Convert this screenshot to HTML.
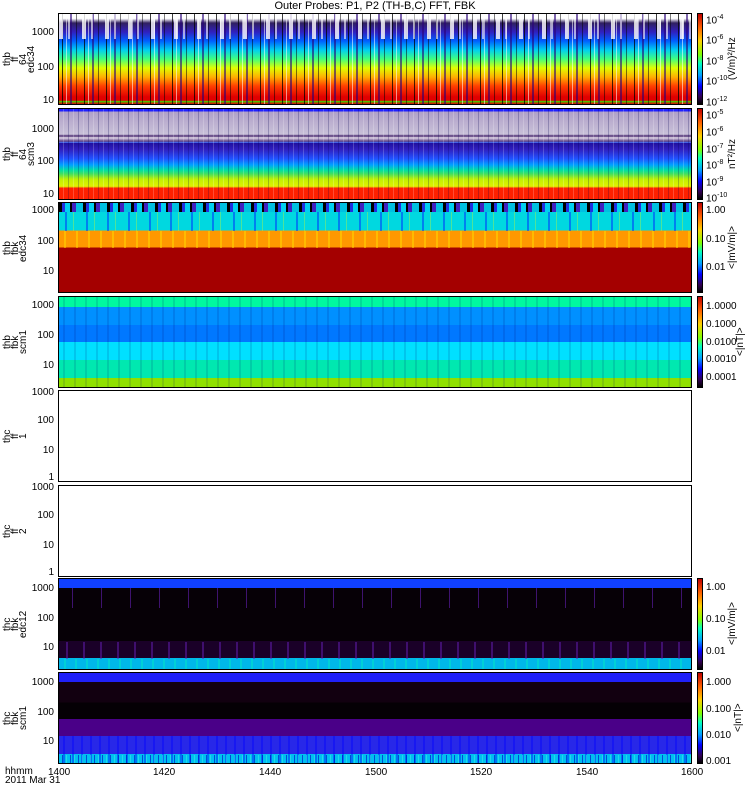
<!DOCTYPE html>
<html><head><meta charset="utf-8"><style>
body{margin:0;width:750px;height:800px;background:#fff;position:relative;overflow:hidden;font-family:"Liberation Sans",sans-serif;color:#000}
.p{position:absolute;left:58px;width:634px;border:1px solid #000;box-sizing:border-box;overflow:hidden}
.o{position:absolute;left:0;right:0;top:0;bottom:0}
.cb{position:absolute;left:697px;width:6px;border:1px solid #000;box-sizing:border-box;background:linear-gradient(#c00000,#ff6000 15%,#ffd000 30%,#80ff00 45%,#00ffc0 55%,#00a0ff 68%,#0000ff 80%,#300050 92%,#000)}
.t{position:absolute;font-size:10px;line-height:10px;text-align:right;width:40px;left:14px}
.c{position:absolute;font-size:10px;line-height:10px;left:706px}
.s{position:absolute;left:4px;width:26px;height:92px;font-size:10px;line-height:8px;writing-mode:vertical-rl;transform:rotate(180deg);text-align:center}
.u{position:absolute;height:92px;font-size:10px;line-height:10px;writing-mode:vertical-rl;transform:rotate(180deg);text-align:center;white-space:nowrap}
.x{position:absolute;top:767px;font-size:10px}
</style></head><body>
<div style="position:absolute;top:0;left:0;width:750px;text-align:center;font-size:11px;line-height:12px">Outer Probes: P1, P2 (TH-B,C) FFT, FBK</div>

<!-- P1 -->
<div class="p" style="top:13px;height:92px;background:linear-gradient(#fff,#fff 5%,#302060 10%,#3020c0 20%,#0060ff 30%,#00d0f0 40%,#40ff80 50%,#e0ff00 60%,#ffb000 70%,#ff4000 80%,#e00000 92%,#e00000 96%,#40d000 97%,#e00000)">
<div class="o" style="background:repeating-linear-gradient(90deg,transparent 0 3px,rgba(0,0,0,.75) 3px 4px,transparent 4px 7px,rgba(255,255,255,.55) 7px 8px,transparent 8px 11px,rgba(40,0,120,.6) 11px 13px,transparent 13px 17px,rgba(0,0,0,.5) 17px 18px,transparent 18px 22px)"></div>
<div class="o" style="background:repeating-linear-gradient(90deg,rgba(255,255,255,.8) 0 4px,transparent 4px 9px,rgba(255,255,255,.6) 9px 11px,transparent 11px 23px);height:25px"></div>
</div>
<div class="cb" style="top:13px;height:92px"></div>
<div class="c" style="top:13px">10<sup style="font-size:7px">-4</sup></div>
<div class="c" style="top:33px">10<sup style="font-size:7px">-6</sup></div>
<div class="c" style="top:54px">10<sup style="font-size:7px">-8</sup></div>
<div class="c" style="top:74px">10<sup style="font-size:7px">-10</sup></div>
<div class="c" style="top:95px">10<sup style="font-size:7px">-12</sup></div>
<div class="u" style="left:728px;top:13px">(V/m)²/Hz</div>
<div class="t" style="top:28px">1000</div><div class="t" style="top:63px">100</div><div class="t" style="top:96px">10</div>
<div class="s" style="top:13px">thb<br>ff<br>64<br>edc34</div>

<!-- P2 -->
<div class="p" style="top:108px;height:92px;background:linear-gradient(#2020ff 0 3%,#b0a0c8 3%,#c8c0d8 28%,#4a2a70 30%,#e0d8e8 32%,#5a3a80 36%,#5080ff 37%,#2010a0 38%,#3020c0 45%,#2050ff 55%,#00a0ff 62%,#00e0a0 68%,#40e060 72%,#c0f000 78%,#e0f000 86%,#ff2000 88%,#ff2000)">
<div class="o" style="background:repeating-linear-gradient(90deg,transparent 0 4px,rgba(255,255,255,.2) 4px 5px,transparent 5px 9px,rgba(0,0,80,.25) 9px 10px)"></div>
</div>
<div class="cb" style="top:108px;height:92px"></div>
<div class="c" style="top:108px">10<sup style="font-size:7px">-5</sup></div>
<div class="c" style="top:125px">10<sup style="font-size:7px">-6</sup></div>
<div class="c" style="top:142px">10<sup style="font-size:7px">-7</sup></div>
<div class="c" style="top:158px">10<sup style="font-size:7px">-8</sup></div>
<div class="c" style="top:175px">10<sup style="font-size:7px">-9</sup></div>
<div class="c" style="top:191px">10<sup style="font-size:7px">-10</sup></div>
<div class="u" style="left:728px;top:108px">nT²/Hz</div>
<div class="t" style="top:125px">1000</div><div class="t" style="top:157px">100</div><div class="t" style="top:190px">10</div>
<div class="s" style="top:108px">thb<br>ff<br>64<br>scm3</div>

<!-- P3 -->
<div class="p" style="top:202px;height:91px;background:linear-gradient(#202080 0 10%,#00d8e0 10% 31%,#ff9800 31% 50%,#a40000 50%)">
<div class="o" style="height:9px;background:repeating-linear-gradient(90deg,#000 0 3px,#2030e0 3px 6px,#00d0f0 6px 11px,#000 11px 13px,#4020c0 13px 17px,#00c0e0 17px 24px)"></div>
<div class="o" style="top:9px;height:19px;background:repeating-linear-gradient(90deg,transparent 0 6px,rgba(0,40,255,.5) 6px 8px,transparent 8px 14px,rgba(255,255,0,.3) 14px 15px,transparent 15px 21px)"></div>
<div class="o" style="top:28px;height:17px;background:repeating-linear-gradient(90deg,transparent 0 5px,rgba(255,220,0,.5) 5px 7px,transparent 7px 12px)"></div>
</div>
<div class="cb" style="top:202px;height:91px"></div>
<div class="c" style="top:206px">1.00</div><div class="c" style="top:235px">0.10</div><div class="c" style="top:263px">0.01</div>
<div class="u" style="left:728px;top:202px">&lt;|mV/m|&gt;</div>
<div class="t" style="top:206px">1000</div><div class="t" style="top:237px">100</div><div class="t" style="top:267px">10</div>
<div class="s" style="top:202px">thb<br>fbk<br>edc34</div>

<!-- P4 -->
<div class="p" style="top:296px;height:92px;background:linear-gradient(#00f8a0 0 11%,#0090ff 11% 31%,#0078ff 31% 50%,#00e0ff 50% 70%,#00e8b0 70% 90%,#90e000 90%)">
<div class="o" style="background:repeating-linear-gradient(90deg,transparent 0 4px,rgba(0,0,100,.12) 4px 6px,transparent 6px 11px)"></div>
</div>
<div class="cb" style="top:296px;height:92px"></div>
<div class="c" style="top:302px">1.0000</div><div class="c" style="top:320px">0.1000</div><div class="c" style="top:338px">0.0100</div><div class="c" style="top:355px">0.0010</div><div class="c" style="top:373px">0.0001</div>
<div class="u" style="left:736px;top:296px">&lt;|nT|&gt;</div>
<div class="t" style="top:301px">1000</div><div class="t" style="top:331px">100</div><div class="t" style="top:361px">10</div>
<div class="s" style="top:296px">thb<br>fbk<br>scm1</div>

<!-- P5, P6 -->
<div class="p" style="top:390px;height:92px"></div>
<div class="t" style="top:388px">1000</div><div class="t" style="top:416px">100</div><div class="t" style="top:446px">10</div><div class="t" style="top:473px">1</div>
<div class="s" style="top:390px">thc<br>ff<br>1</div>
<div class="p" style="top:485px;height:92px"></div>
<div class="t" style="top:483px">1000</div><div class="t" style="top:511px">100</div><div class="t" style="top:541px">10</div><div class="t" style="top:568px">1</div>
<div class="s" style="top:485px">thc<br>ff<br>2</div>

<!-- P7 -->
<div class="p" style="top:578px;height:92px;background:linear-gradient(#1040ff 0 10%,#060006 10% 69%,#1a0028 69% 88%,#00b8e8 88%)">
<div class="o" style="top:9px;height:20px;background:repeating-linear-gradient(90deg,transparent 0 13px,rgba(100,30,180,.6) 13px 14px,transparent 14px 29px)"></div>
<div class="o" style="top:63px;height:17px;background:repeating-linear-gradient(90deg,transparent 0 7px,rgba(100,30,180,.5) 7px 9px,transparent 9px 17px)"></div>
<div class="o" style="top:80px;background:repeating-linear-gradient(90deg,transparent 0 5px,rgba(0,255,180,.35) 5px 7px,transparent 7px 11px)"></div>
</div>
<div class="cb" style="top:578px;height:92px"></div>
<div class="c" style="top:583px">1.00</div><div class="c" style="top:615px">0.10</div><div class="c" style="top:647px">0.01</div>
<div class="u" style="left:728px;top:578px">&lt;|mV/m|&gt;</div>
<div class="t" style="top:584px">1000</div><div class="t" style="top:614px">100</div><div class="t" style="top:643px">10</div>
<div class="s" style="top:578px">thc<br>fbk<br>edc12</div>

<!-- P8 -->
<div class="p" style="top:672px;height:92px;background:linear-gradient(#2020f8 0 10%,#120010 10% 33%,#050005 33% 51%,#4a0088 51% 70%,#2828e8 70% 90%,#00c0f0 90%)">
<div class="o" style="top:63px;background:repeating-linear-gradient(90deg,transparent 0 4px,rgba(0,0,255,.4) 4px 6px,transparent 6px 9px)"></div>
<div class="o" style="top:82px;background:repeating-linear-gradient(90deg,transparent 0 3px,rgba(0,0,200,.6) 3px 4px,transparent 4px 7px,rgba(80,255,220,.4) 7px 8px)"></div>
</div>
<div class="cb" style="top:672px;height:92px"></div>
<div class="c" style="top:678px">1.000</div><div class="c" style="top:705px">0.100</div><div class="c" style="top:731px">0.010</div><div class="c" style="top:757px">0.001</div>
<div class="u" style="left:734px;top:672px">&lt;|nT|&gt;</div>
<div class="t" style="top:678px">1000</div><div class="t" style="top:708px">100</div><div class="t" style="top:737px">10</div>
<div class="s" style="top:672px">thc<br>fbk<br>scm1</div>

<div class="x" style="left:5px;line-height:9px">hhmm<br>2011 Mar 31</div>
<div class="x" style="left:48px">1400</div>
<div class="x" style="left:153px">1420</div>
<div class="x" style="left:259px">1440</div>
<div class="x" style="left:365px">1500</div>
<div class="x" style="left:470px">1520</div>
<div class="x" style="left:576px">1540</div>
<div class="x" style="left:681px">1600</div>
</body></html>
